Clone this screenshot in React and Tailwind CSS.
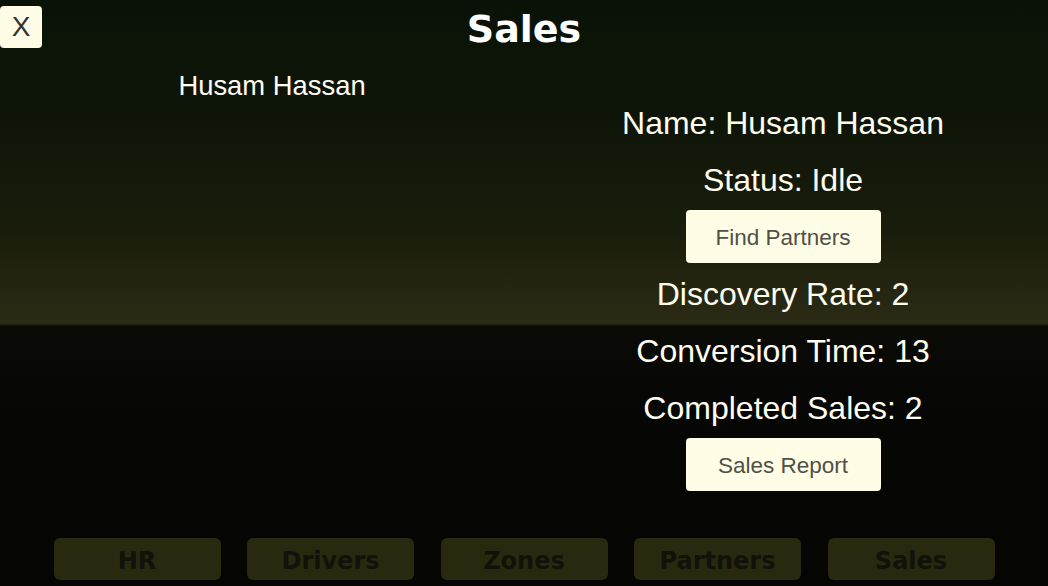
import React from "react"

const tabs = ["HR", "Drivers", "Zones", "Partners", "Sales"]

const InfoRow = ({ children }) => (
  <div className="h-[57px] flex items-center justify-center text-[32px] leading-none text-[#fffdf0] whitespace-nowrap">
    {children}
  </div>
)

const ActionButton = ({ label }) => (
  <div className="h-[57px] flex items-center justify-center">
    <button className="w-[195px] h-[53px] rounded-[4px] bg-[#fffde6] text-[#505048] text-[22.5px] leading-none pt-[3px]">
      {label}
    </button>
  </div>
)

export default function App() {
  return (
    <div
      className="h-[586px] w-full flex flex-col overflow-hidden font-['Liberation_Sans',Arial,sans-serif] bg-[linear-gradient(to_bottom,#0a1207_0%,#0e1508_20%,#1a1d0b_40%,#2a2a14_54%,#2b2a14_55.3%,#0a0a06_55.6%,#060605_70%,#050504_100%)]"
    >
      {/* header */}
      <div className="grid grid-cols-[42px_1fr_42px] items-start h-[56px]">
        <button className="mt-[6px] w-[42px] h-[42px] rounded-[4px] bg-[#fffde6] text-[#333330] text-[28px] leading-none flex items-center justify-center">
          X
        </button>
        <h1 className="text-center text-[38px] leading-none pt-[10px] font-bold text-white font-['DejaVu_Sans',Verdana,sans-serif]">
          Sales
        </h1>
        <div />
      </div>

      {/* body */}
      <div className="grid grid-cols-2 flex-1">
        <div className="pt-[15px] pl-[20px] text-center text-[27.4px] leading-[30px] text-[#fffdf0]">
          Husam Hassan
        </div>
        <div className="pt-[38px] flex flex-col pr-[6px]">
          <InfoRow>Name: Husam Hassan</InfoRow>
          <InfoRow>Status: Idle</InfoRow>
          <ActionButton label="Find Partners" />
          <InfoRow>Discovery Rate: 2</InfoRow>
          <InfoRow>Conversion Time: 13</InfoRow>
          <InfoRow>Completed Sales: 2</InfoRow>
          <ActionButton label="Sales Report" />
        </div>
      </div>

      {/* bottom tabs */}
      <div className="flex justify-center gap-[26.5px] pb-[6px]">
        {tabs.map((t) => (
          <button
            key={t}
            className="w-[167px] h-[42px] rounded-[6px] bg-[#29290f] text-[#12120a] text-[24px] leading-none font-bold font-['DejaVu_Sans',Verdana,sans-serif] pt-[4px]"
          >
            {t}
          </button>
        ))}
      </div>
    </div>
  )
}
